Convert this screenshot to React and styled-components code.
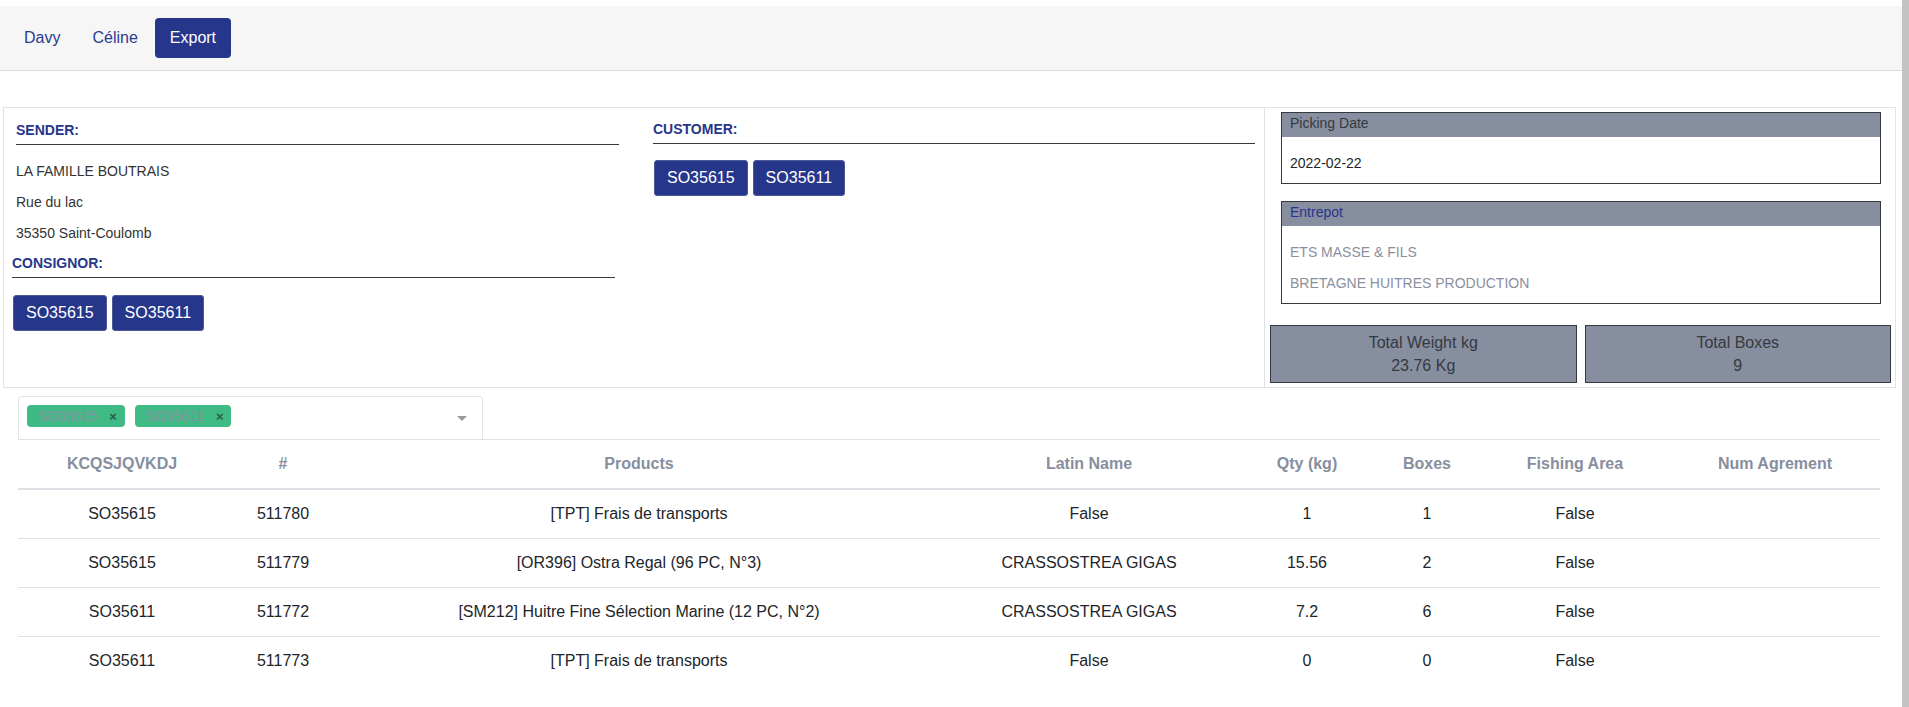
import React from 'react'
import styled, { createGlobalStyle } from 'styled-components'

const GlobalStyle = createGlobalStyle`
  html {
    background: #c3c3c3;
  }
  body {
    margin: 0 7px 0 0;
    min-height: 100vh;
    background: #fff;
    font-family: "Liberation Sans", Arial, sans-serif;
    color: #212529;
  }
  * {
    box-sizing: border-box;
  }
`

const navy = '#26368b'
const slate = '#878ea0'

const rows = [
  { order: 'SO35615', id: '511780', product: '[TPT] Frais de transports', latin: 'False', qty: '1', boxes: '1', area: 'False' },
  { order: 'SO35615', id: '511779', product: '[OR396] Ostra Regal (96 PC, N°3)', latin: 'CRASSOSTREA GIGAS', qty: '15.56', boxes: '2', area: 'False' },
  { order: 'SO35611', id: '511772', product: '[SM212] Huitre Fine Sélection Marine (12 PC, N°2)', latin: 'CRASSOSTREA GIGAS', qty: '7.2', boxes: '6', area: 'False' },
  { order: 'SO35611', id: '511773', product: '[TPT] Frais de transports', latin: 'False', qty: '0', boxes: '0', area: 'False' }
]

const columns = [
  { title: 'KCQSJQVKDJ', width: 208 },
  { title: '#', width: 114 },
  { title: 'Products', width: 598 },
  { title: 'Latin Name', width: 302 },
  { title: 'Qty (kg)', width: 134 },
  { title: 'Boxes', width: 106 },
  { title: 'Fishing Area', width: 190 },
  { title: 'Num Agrement', width: 210 }
]

const orders = ['SO35615', 'SO35611']

export default function App() {
  return (
    <Page>
      <GlobalStyle />
      <Header>
        <NavLink>Davy</NavLink>
        <NavLink>Céline</NavLink>
        <NavLink active>Export</NavLink>
      </Header>

      <Card>
        <SenderColumn>
          <Section shift={4}>
            <SectionTitle>SENDER:</SectionTitle>
            <AddressLine>LA FAMILLE BOUTRAIS</AddressLine>
            <AddressLine>Rue du lac</AddressLine>
            <AddressLine>35350 Saint-Coulomb</AddressLine>
          </Section>
          <Section>
            <SectionTitle gap={17}>CONSIGNOR:</SectionTitle>
            <ButtonRow>
              {orders.map((o) => (
                <OrderButton key={o}>{o}</OrderButton>
              ))}
            </ButtonRow>
          </Section>
        </SenderColumn>

        <CustomerColumn>
          <SectionTitle>CUSTOMER:</SectionTitle>
          <ButtonRow>
            {orders.map((o) => (
              <OrderButton key={o}>{o}</OrderButton>
            ))}
          </ButtonRow>
        </CustomerColumn>

        <InfoColumn>
          <InfoBox>
            <InfoHead>Picking Date</InfoHead>
            <InfoBody>
              <InfoLine>2022-02-22</InfoLine>
            </InfoBody>
          </InfoBox>
          <InfoBox spaced>
            <InfoHead highlight>Entrepot</InfoHead>
            <InfoBody>
              <InfoLine muted>ETS MASSE &amp; FILS</InfoLine>
              <InfoLine muted>BRETAGNE HUITRES PRODUCTION</InfoLine>
            </InfoBody>
          </InfoBox>
          <Totals>
            <TotalBox>
              <div>Total Weight kg</div>
              <div>23.76 Kg</div>
            </TotalBox>
            <TotalBox>
              <div>Total Boxes</div>
              <div>9</div>
            </TotalBox>
          </Totals>
        </InfoColumn>
      </Card>

      <SelectBox>
        {orders.map((o) => (
          <Chip key={o}>
            {o}
            <ChipClose>×</ChipClose>
          </Chip>
        ))}
        <Caret />
      </SelectBox>

      <Table>
        <colgroup>
          {columns.map((c) => (
            <col key={c.title} style={{ width: c.width }} />
          ))}
        </colgroup>
        <thead>
          <tr>
            {columns.map((c) => (
              <Th key={c.title}>{c.title}</Th>
            ))}
          </tr>
        </thead>
        <tbody>
          {rows.map((r) => (
            <tr key={r.id}>
              <Td>{r.order}</Td>
              <Td>{r.id}</Td>
              <Td>{r.product}</Td>
              <Td>{r.latin}</Td>
              <Td>{r.qty}</Td>
              <Td>{r.boxes}</Td>
              <Td>{r.area}</Td>
              <Td />
            </tr>
          ))}
        </tbody>
      </Table>
    </Page>
  )
}

const Page = styled.div`
  padding-top: 6px;
`

const Header = styled.nav`
  display: flex;
  align-items: center;
  gap: 2px;
  height: 65px;
  padding-left: 9px;
  background: #f6f6f6;
  border-bottom: 1px solid #dcdcdc;
`

const NavLink = styled.a`
  display: flex;
  align-items: center;
  height: 40px;
  padding: 0 15px;
  border-radius: 4px;
  font-size: 16px;
  color: ${({ active }) => (active ? '#fff' : '#2b3a8e')};
  background: ${({ active }) => (active ? navy : 'transparent')};
  cursor: pointer;
`

const Card = styled.div`
  display: flex;
  margin: 36px 6px 0 3px;
  border: 1px solid #e3e3e3;
`

const SenderColumn = styled.div`
  width: 630px;
  padding: 14px 19px 0 8px;
`

const CustomerColumn = styled.div`
  width: 630px;
  padding: 13px 9px 0 19px;
`

const InfoColumn = styled.div`
  flex: 1;
  padding: 4px 4px 4px 5px;
  border-left: 1px solid #e0e0e6;
`

const Section = styled.div`
  margin-left: ${({ shift }) => shift || 0}px;
  margin-right: ${({ shift }) => -(shift || 0)}px;
`

const SectionTitle = styled.div`
  padding-bottom: 5px;
  margin-bottom: ${({ gap }) => gap || 16}px;
  border-bottom: 1px solid #343a40;
  font-size: 14px;
  line-height: 17px;
  font-weight: bold;
  color: ${navy};
`

const AddressLine = styled.p`
  margin: 0 0 11px;
  font-size: 14px;
  line-height: 20px;
  color: #333;

  &:last-child {
    margin-bottom: 12px;
  }
`

const ButtonRow = styled.div`
  display: flex;
  gap: 5px;
  margin-left: 1px;
`

const OrderButton = styled.button`
  height: 36px;
  padding: 0 12px;
  border: 1px solid #4d5894;
  border-radius: 3px;
  background: ${navy};
  color: #fff;
  font-family: inherit;
  font-size: 16px;
`

const InfoBox = styled.div`
  margin: ${({ spaced }) => (spaced ? '17px' : '0')} 10px 0 11px;
  border: 1px solid #343a40;
`

const InfoHead = styled.div`
  height: 24px;
  padding: 0 8px;
  background: ${slate};
  font-size: 14px;
  line-height: 20px;
  color: ${({ highlight }) => (highlight ? navy : '#343a40')};
`

const InfoBody = styled.div`
  display: flex;
  flex-direction: column;
  gap: 11px;
  padding: 16px 8px 10px;
`

const InfoLine = styled.div`
  font-size: 14px;
  line-height: 20px;
  color: ${({ muted }) => (muted ? '#8a8fa0' : '#212529')};
`

const Totals = styled.div`
  display: flex;
  gap: 8px;
  margin-top: 21px;
`

const TotalBox = styled.div`
  flex: 1;
  padding: 5px 0;
  border: 1px solid #343a40;
  background: ${slate};
  text-align: center;
  font-size: 16px;
  line-height: 23px;
  color: #343a40;
`

const SelectBox = styled.div`
  position: relative;
  display: flex;
  gap: 10px;
  width: 465px;
  height: 43px;
  margin: 8px 0 0 18px;
  padding: 8px;
  border: 1px solid #e5e5e5;
  border-bottom: none;
  border-radius: 4px 4px 0 0;
`

const Chip = styled.span`
  display: flex;
  align-items: center;
  gap: 12px;
  height: 22px;
  padding: 0 8px 0 11px;
  border-radius: 4px;
  background: #40ba84;
  font-size: 14px;
  color: #8a90a2;
`

const ChipClose = styled.span`
  font-size: 13px;
  font-weight: bold;
  color: #2b5c48;
`

const Caret = styled.span`
  position: absolute;
  right: 15px;
  top: 19px;
  border-top: 5px solid #9a9a9a;
  border-left: 5px solid transparent;
  border-right: 5px solid transparent;
`

const Table = styled.table`
  width: 1862px;
  margin-left: 18px;
  border-collapse: collapse;
  table-layout: fixed;
  font-size: 16px;
  line-height: 24px;
`

const Th = styled.th`
  padding: 12px;
  border-top: 1px solid #dee2e6;
  border-bottom: 2px solid #dee2e6;
  color: #878ea0;
  font-weight: bold;
  text-align: center;
`

const Td = styled.td`
  padding: 12px;
  text-align: center;
  color: #212529;
  tr:not(:last-child) > & {
    border-bottom: 1px solid #dee2e6;
  }
`
